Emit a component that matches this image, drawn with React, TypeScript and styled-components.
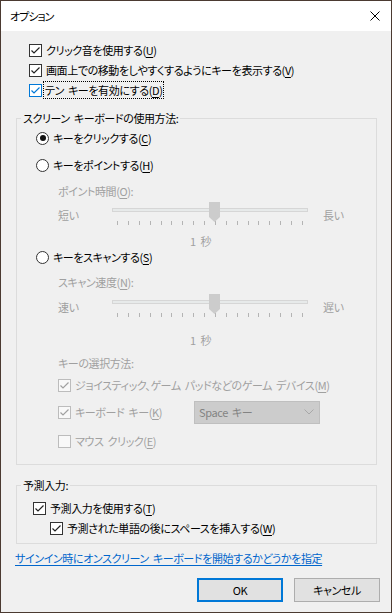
import styled, { createGlobalStyle } from "styled-components";

const GlobalStyle = createGlobalStyle`
  html, body {
    margin: 0;
    padding: 0;
    background: #ffffff;
  }
`;

const Window = styled.div`
  width: 392px;
  height: 613px;
  box-sizing: border-box;
  border: 1px solid #4b3a31;
  background: #f0f0f0;
  display: flex;
  flex-direction: column;
  font-family: "Noto Sans CJK JP", "Noto Sans", sans-serif;
  font-size: 11px;
  letter-spacing: -0.4px;
  word-spacing: 2px;
  font-feature-settings: "palt";
  color: #000;
  overflow: hidden;
`;

const TitleBar = styled.div`
  height: 30px;
  flex: none;
  background: #ffffff;
  display: flex;
  align-items: center;
  justify-content: space-between;
  padding: 0 11px 0 9px;
`;

const Title = styled.span`
  line-height: 16px;
  letter-spacing: -1px;
`;

const Body = styled.div`
  flex: 1;
  display: flex;
  flex-direction: column;
  padding: 9px 11px 0 14px;
`;

const Row = styled.div<{ $h: number; $indent?: number; $pt?: number }>`
  height: ${(p) => p.$h}px;
  box-sizing: border-box;
  padding-left: ${(p) => p.$indent ?? 0}px;
  padding-top: ${(p) => p.$pt ?? 0}px;
  display: flex;
  align-items: center;
  gap: 4px;
  flex: none;
`;

const Label = styled.span<{ $disabled?: boolean; $focus?: boolean; $w?: number }>`
  line-height: 16px;
  white-space: nowrap;
  color: ${(p) => (p.$disabled ? "#a0a0a0" : "#000")};
  ${(p) => (p.$w ? `width: ${p.$w}px;` : "")}
  ${(p) =>
    p.$focus
      ? "border: 1px dotted #000; padding: 0 1px; margin-left: -3px;"
      : ""}
`;

const Key = styled.u`
  text-decoration-thickness: 1px;
  text-underline-offset: 2px;
`;

type BoxState = "normal" | "focus" | "disabled";

const CheckBox = styled.span<{ $state: BoxState }>`
  width: 13px;
  height: 13px;
  flex: none;
  box-sizing: border-box;
  display: inline-flex;
  border: 1px solid
    ${(p) =>
      p.$state === "focus" ? "#0078d7" : p.$state === "disabled" ? "#bcbcbc" : "#333333"};
  background: ${(p) => (p.$state === "disabled" ? "#f8f8f8" : "#ffffff")};
  color: ${(p) =>
    p.$state === "focus" ? "#0078d7" : p.$state === "disabled" ? "#a0a0a0" : "#222222"};
`;

const Radio = styled.span<{ $on?: boolean }>`
  width: 13px;
  height: 13px;
  flex: none;
  box-sizing: border-box;
  border: 1px solid #333333;
  border-radius: 50%;
  background: #ffffff;
  display: inline-flex;
  align-items: center;
  justify-content: center;

  &::after {
    content: "";
    display: ${(p) => (p.$on ? "block" : "none")};
    width: 6px;
    height: 6px;
    border-radius: 50%;
    background: #111;
  }
`;

const Group = styled.fieldset<{ $mt: number; $pt: number; $pb: number }>`
  margin: ${(p) => p.$mt}px 3px 0 1px;
  padding: ${(p) => p.$pt}px 0 ${(p) => p.$pb}px 0;
  border: 1px solid #dcdcdc;
  min-width: 0;
  display: flex;
  flex-direction: column;
`;

const Legend = styled.legend`
  margin-left: 4px;
  padding: 0 2px;
  line-height: 16px;
  height: 16px;
`;

const Inner = styled.div<{ $pl: number }>`
  display: flex;
  flex-direction: column;
  padding-left: ${(p) => p.$pl}px;
`;

const SliderRow = styled.div`
  height: 32px;
  flex: none;
  padding-left: 22px;
  display: flex;
  align-items: flex-start;
`;

const SliderEnd = styled.span<{ $w: number }>`
  width: ${(p) => p.$w}px;
  margin-top: 6px;
  line-height: 14px;
  color: #a0a0a0;
`;

const Track = styled.div`
  width: 196px;
  height: 32px;
  position: relative;
  margin-right: 15px;
`;

const Rail = styled.div`
  margin-top: 6px;
  height: 4px;
  box-sizing: border-box;
  border: 1px solid #d6d6d6;
  background: #e7eaea;
`;

const Ticks = styled.div`
  margin: 9px 5px 0;
  height: 4px;
  display: flex;
  justify-content: space-between;
`;

const Tick = styled.span`
  width: 1px;
  height: 4px;
  background: #b4b4b4;
`;

const Thumb = styled.svg`
  position: absolute;
  left: 97px;
  top: 0;
`;

const Note = styled.div<{ $h: number }>`
  height: ${(p) => p.$h}px;
  flex: none;
  display: flex;
  align-items: center;
  padding-left: 154px;
  color: #a0a0a0;
  line-height: 14px;
  letter-spacing: 0;
`;

const Select = styled.div`
  width: 126px;
  height: 23px;
  box-sizing: border-box;
  border: 1px solid #bfbfbf;
  background: #cccccc;
  color: #838383;
  display: flex;
  align-items: center;
  justify-content: space-between;
  padding: 0 5px 0 4px;
`;

const Link = styled.a`
  color: #0066cc;
  text-decoration: underline;
  text-decoration-thickness: 1px;
  text-underline-offset: 2px;
  line-height: 16px;
  white-space: nowrap;
  cursor: pointer;
`;

const Buttons = styled.div`
  margin-top: 6px;
  display: flex;
  justify-content: flex-end;
  gap: 11px;
`;

const Button = styled.button<{ $primary?: boolean }>`
  width: 86px;
  height: 24px;
  box-sizing: border-box;
  border: ${(p) => (p.$primary ? "2px solid #0078d7" : "1px solid #adadad")};
  background: #e1e1e1;
  font: inherit;
  letter-spacing: inherit;
  font-feature-settings: "palt";
  color: #000;
  padding: 0;
`;

const Check = ({ state = "normal", checked = true }: { state?: BoxState; checked?: boolean }) => (
  <CheckBox $state={state}>
    {checked && (
      <svg width="11" height="11" viewBox="0 0 11 11">
        <polyline points="1.5,5.5 4,8 9.5,2.5" fill="none" stroke="currentColor" strokeWidth="1.2" />
      </svg>
    )}
  </CheckBox>
);

const Slider = ({ min, max }: { min: string; max: string }) => (
  <SliderRow>
    <SliderEnd $w={54}>{min}</SliderEnd>
    <Track>
      <Rail />
      <Ticks>
        {Array.from({ length: 18 }, (_, i) => (
          <Tick key={i} />
        ))}
      </Ticks>
      <Thumb width="11" height="20" viewBox="0 0 11 20">
        <path d="M0 0H11V15L5.5 20L0 15Z" fill="#cccccc" />
      </Thumb>
    </Track>
    <SliderEnd $w={30}>{max}</SliderEnd>
  </SliderRow>
);

const App = () => {
  return (
    <>
      <GlobalStyle />
      <Window>
        <TitleBar>
          <Title>オプション</Title>
          <svg width="10" height="10" viewBox="0 0 10 10">
            <path d="M0.5 0.5L9.5 9.5M9.5 0.5L0.5 9.5" stroke="#000" strokeWidth="1" />
          </svg>
        </TitleBar>
        <Body>
          <Row $h={20} $indent={14}>
            <Check />
            <Label>
              クリック音を使用する(<Key>U</Key>)
            </Label>
          </Row>
          <Row $h={20} $indent={14}>
            <Check />
            <Label>
              画面上での移動をしやすくするようにキーを表示する(<Key>V</Key>)
            </Label>
          </Row>
          <Row $h={20} $indent={14}>
            <Check state="focus" />
            <Label $focus>
              テン キーを有効にする(<Key>D</Key>)
            </Label>
          </Row>

          <Group $mt={10} $pt={0} $pb={8}>
            <Legend>スクリーン キーボードの使用方法:</Legend>
            <Inner $pl={19}>
              <Row $h={24}>
                <Radio $on />
                <Label>
                  キーをクリックする(<Key>C</Key>)
                </Label>
              </Row>
              <Row $h={30}>
                <Radio />
                <Label>
                  キーをポイントする(<Key>H</Key>)
                </Label>
              </Row>
              <Row $h={22} $indent={22}>
                <Label $disabled>
                  ポイント時間(<Key>O</Key>):
                </Label>
              </Row>
              <Slider min="短い" max="長い" />
              <Note $h={14}>1 秒</Note>
              <Row $h={18}>
                <Radio />
                <Label>
                  キーをスキャンする(<Key>S</Key>)
                </Label>
              </Row>
              <Row $h={28} $pt={4} $indent={22}>
                <Label $disabled>
                  スキャン速度(<Key>N</Key>):
                </Label>
              </Row>
              <Slider min="速い" max="遅い" />
              <Note $h={28}>1 秒</Note>
              <Row $h={18} $indent={22}>
                <Label $disabled>キーの選択方法:</Label>
              </Row>
              <Row $h={26} $indent={22}>
                <Check state="disabled" />
                <Label $disabled>
                  ジョイスティック、ゲーム パッドなどのゲーム デバイス(<Key>M</Key>)
                </Label>
              </Row>
              <Row $h={28} $indent={22}>
                <Check state="disabled" />
                <Label $disabled $w={115}>
                  キーボード キー(<Key>K</Key>)
                </Label>
                <Select>
                  <span>Space キー</span>
                  <svg width="10" height="6" viewBox="0 0 10 6">
                    <polyline points="0.5,0.5 5,5 9.5,0.5" fill="none" stroke="#a8a8a8" strokeWidth="1" />
                  </svg>
                </Select>
              </Row>
              <Row $h={30} $indent={22}>
                <Check state="disabled" checked={false} />
                <Label $disabled>
                  マウス クリック(<Key>E</Key>)
                </Label>
              </Row>
            </Inner>
          </Group>

          <Group $mt={12} $pt={5} $pb={5}>
            <Legend>予測入力:</Legend>
            <Inner $pl={16}>
              <Row $h={20}>
                <Check />
                <Label>
                  予測入力を使用する(<Key>T</Key>)
                </Label>
              </Row>
              <Row $h={20} $indent={17}>
                <Check />
                <Label>
                  予測された単語の後にスペースを挿入する(<Key>W</Key>)
                </Label>
              </Row>
            </Inner>
          </Group>

          <Row $h={28}>
            <Link>サインイン時にオンスクリーン キーボードを開始するかどうかを指定</Link>
          </Row>

          <Buttons>
            <Button $primary>OK</Button>
            <Button>キャンセル</Button>
          </Buttons>
        </Body>
      </Window>
    </>
  );
};

export default App;
